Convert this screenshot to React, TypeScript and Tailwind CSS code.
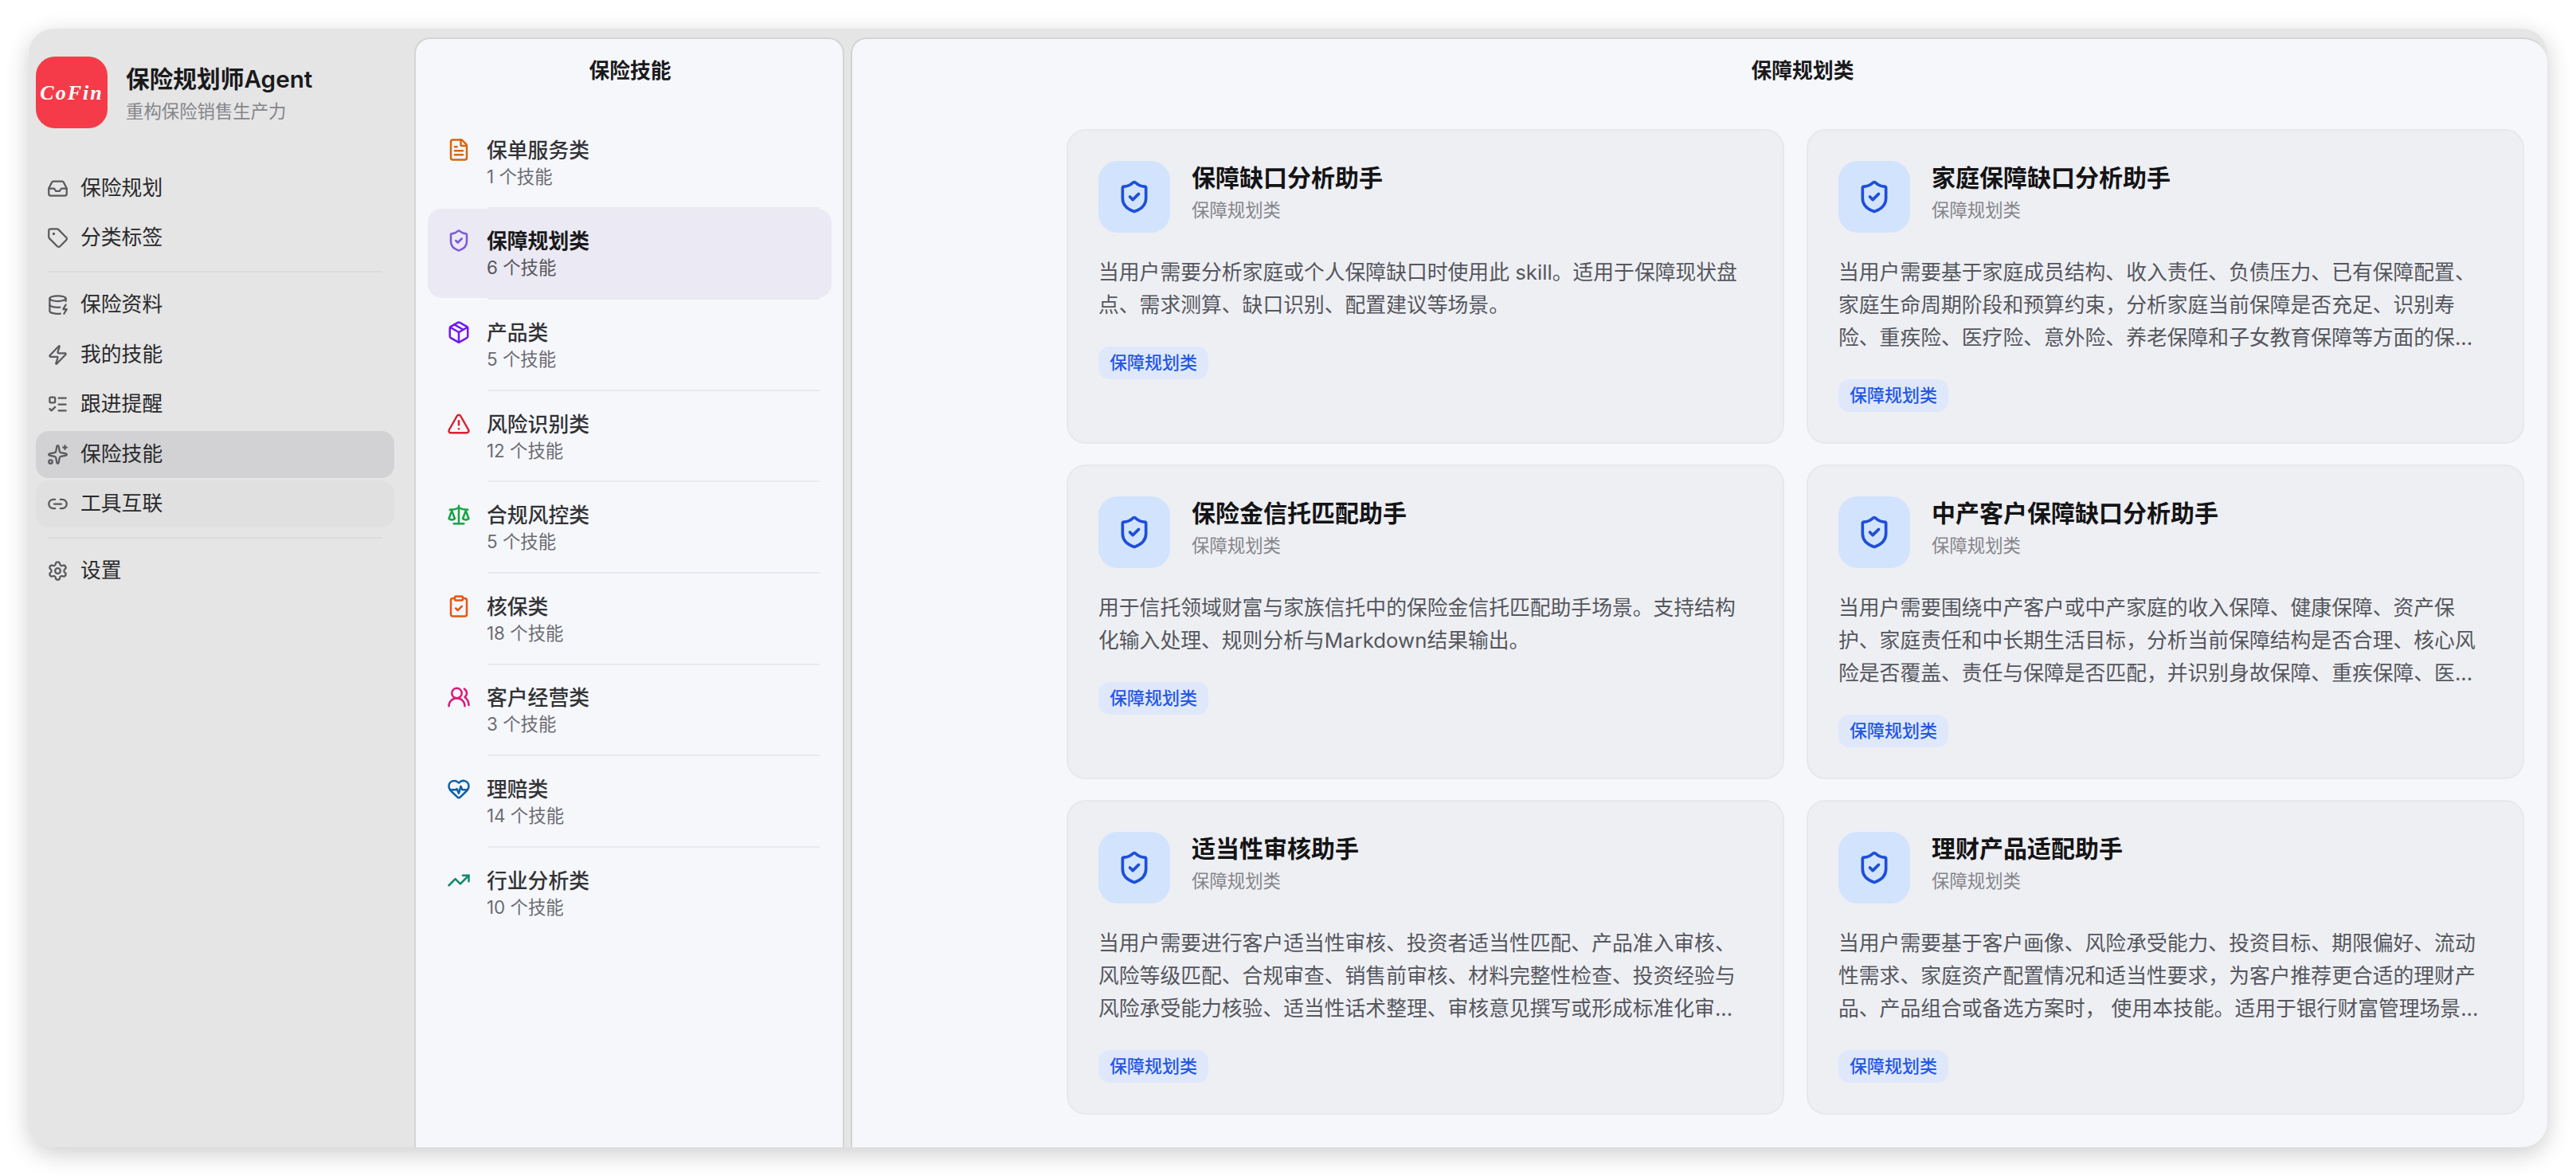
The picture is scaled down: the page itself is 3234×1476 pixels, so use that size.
import {
  Inbox,
  Tag,
  DatabaseZap,
  Zap,
  ListTodo,
  Sparkles,
  Link2,
  Settings,
  FileText,
  ShieldCheck,
  Package,
  TriangleAlert,
  Scale,
  ClipboardCheck,
  UsersRound,
  HeartPulse,
  TrendingUp,
} from "lucide-react";

const navGroups = [
  [
    { icon: Inbox, label: "保险规划" },
    { icon: Tag, label: "分类标签" },
  ],
  [
    { icon: DatabaseZap, label: "保险资料" },
    { icon: Zap, label: "我的技能" },
    { icon: ListTodo, label: "跟进提醒" },
    { icon: Sparkles, label: "保险技能", active: true },
    { icon: Link2, label: "工具互联", hover: true },
  ],
  [{ icon: Settings, label: "设置" }],
];

const categories = [
  { icon: FileText, color: "text-[#d9660f]", name: "保单服务类", count: "1 个技能" },
  { icon: ShieldCheck, color: "text-[#7a5ad8]", name: "保障规划类", count: "6 个技能", active: true },
  { icon: Package, color: "text-[#6f18f0]", name: "产品类", count: "5 个技能" },
  { icon: TriangleAlert, color: "text-[#dc1f2e]", name: "风险识别类", count: "12 个技能" },
  { icon: Scale, color: "text-[#18a344]", name: "合规风控类", count: "5 个技能" },
  { icon: ClipboardCheck, color: "text-[#ea5510]", name: "核保类", count: "18 个技能" },
  { icon: UsersRound, color: "text-[#db1a78]", name: "客户经营类", count: "3 个技能" },
  { icon: HeartPulse, color: "text-[#0f5fa6]", name: "理赔类", count: "14 个技能" },
  { icon: TrendingUp, color: "text-[#14876f]", name: "行业分析类", count: "10 个技能" },
];

const skills = [
  {
    title: "保障缺口分析助手",
    desc: "当用户需要分析家庭或个人保障缺口时使用此 skill。适用于保障现状盘点、需求测算、缺口识别、配置建议等场景。",
  },
  {
    title: "家庭保障缺口分析助手",
    desc: "当用户需要基于家庭成员结构、收入责任、负债压力、已有保障配置、家庭生命周期阶段和预算约束，分析家庭当前保障是否充足、识别寿险、重疾险、医疗险、意外险、养老保障和子女教育保障等方面的保...",
  },
  {
    title: "保险金信托匹配助手",
    desc: "用于信托领域财富与家族信托中的保险金信托匹配助手场景。支持结构化输入处理、规则分析与Markdown结果输出。",
  },
  {
    title: "中产客户保障缺口分析助手",
    desc: "当用户需要围绕中产客户或中产家庭的收入保障、健康保障、资产保护、家庭责任和中长期生活目标，分析当前保障结构是否合理、核心风险是否覆盖、责任与保障是否匹配，并识别身故保障、重疾保障、医...",
  },
  {
    title: "适当性审核助手",
    desc: "当用户需要进行客户适当性审核、投资者适当性匹配、产品准入审核、风险等级匹配、合规审查、销售前审核、材料完整性检查、投资经验与风险承受能力核验、适当性话术整理、审核意见撰写或形成标准化审...",
  },
  {
    title: "理财产品适配助手",
    desc: "当用户需要基于客户画像、风险承受能力、投资目标、期限偏好、流动性需求、家庭资产配置情况和适当性要求，为客户推荐更合适的理财产品、产品组合或备选方案时， 使用本技能。适用于银行财富管理场景...",
  },
];

const Sidebar = () => (
  <aside className="w-[484px] shrink-0 pl-[9px] pr-[25px] pt-[24px]">
    {/* Brand */}
    <div className="flex gap-[23px]">
      <div className="w-[90px] h-[90px] rounded-[24px] bg-[#f53b49] flex items-center justify-center">
        <span className="[font-family:'Liberation_Serif',serif] italic font-bold text-white text-[26px] tracking-[2px]">CoFin</span>
      </div>
      <div className="pt-[10px]">
        <div className="text-[29.7px] leading-[36px] font-semibold text-[#1a1a1c]">保险规划师Agent</div>
        <div className="mt-[7px] text-[22.4px] leading-[32px] text-[#85858a]">重构保险销售生产力</div>
      </div>
    </div>

    {/* Navigation */}
    <nav className="mt-[45.5px]">
      {navGroups.map((group, i) => (
        <div key={i}>
          {i > 0 && <div className="h-[2px] mx-[15px] my-[11.5px] bg-[#dcdcdc]" />}
          <div className="flex flex-col gap-[3.5px]">
            {group.map((item) => (
              <div
                key={item.label}
                className={`h-[59px] rounded-[16px] pl-[14px] flex items-center gap-[15px] text-[25.8px] text-[#2a2a2c] ${
                  item.active ? "bg-[#d2d2d4]" : item.hover ? "bg-[#e0e0e0]" : ""
                }`}
              >
                <item.icon className="w-[27px] h-[27px] text-[#5a5a5e]" />
                <span>{item.label}</span>
              </div>
            ))}
          </div>
        </div>
      ))}
    </nav>
  </aside>
);

const CategoryPanel = () => (
  <section className="w-[540px] shrink-0 bg-[#f5f7fb] border-2 border-b-0 border-[#d4d4d4] rounded-t-[20px]">
    <div className="h-[80px] pl-[2px] flex items-center justify-center text-[25.8px] font-semibold text-[#1a1a1c]">保险技能</div>
    <div className="pt-[18px] pl-[15px] pr-[14px]">
      {categories.map((cat, i) => (
        <div key={cat.name}>
          <div
            className={`h-[112.6px] rounded-[18px] pl-[24px] flex items-center gap-[20px] ${
              cat.active ? "bg-[#ebe9f3]" : ""
            }`}
          >
            <div className="flex gap-[20px]">
              <cat.icon className={`w-[30px] h-[30px] mt-[4px] ${cat.color}`} />
              <div className="pt-[2px]">
                <div className={`text-[25.8px] leading-[36px] ${cat.active ? "font-semibold text-[#1a1a1c]" : "font-medium text-[#333336]"}`}>
                  {cat.name}
                </div>
                <div className={`-mt-[1px] text-[22.4px] leading-[32px] ${cat.active ? "text-[#55555c]" : "text-[#6c6c72]"}`}>{cat.count}</div>
              </div>
            </div>
          </div>
          {i < categories.length - 1 && <div className="h-[2px] ml-[75px] mr-[15px] bg-[#e9eaef]" />}
        </div>
      ))}
    </div>
  </section>
);

const SkillCard = ({ title, desc }: { title: string; desc: string }) => (
  <div className="h-[395px] rounded-[24px] border-2 border-[#e7e8ec] bg-[#eeeff3] p-[38px]">
    <div className="flex gap-[27px]">
      <div className="w-[90px] h-[90px] rounded-[24px] bg-[#d2e3fd] flex items-center justify-center">
        <ShieldCheck className="w-[44px] h-[44px] text-[#1d4fd8]" />
      </div>
      <div className="pt-[3px]">
        <div className="text-[30px] leading-[36px] font-semibold text-[#141416]">{title}</div>
        <div className="mt-[7px] text-[22.4px] leading-[32px] text-[#85858a]">保障规划类</div>
      </div>
    </div>
    <p className="mt-[29px] text-[25.8px] leading-[41px] text-[#55575e]">{desc}</p>
    <span className="mt-[32px] inline-block h-[41px] px-[14px] rounded-[14px] bg-[#dfe8fa] text-[22px] leading-[41px] font-medium text-[#2557e6]">
      保障规划类
    </span>
  </div>
);

export default function App() {
  return (
    <div className="w-[3234px] h-[1476px] bg-white p-[36px] [font-family:Inter,'Noto_Sans_CJK_SC',sans-serif]">
      <div className="w-[3162px] h-[1404px] rounded-[32px] overflow-hidden bg-[#e5e5e5] shadow-[0_8px_30px_rgba(0,0,0,0.2)] pt-[11px] flex">
        <Sidebar />
        <CategoryPanel />
        <main className="ml-[8px] flex-1 bg-[#f5f7fb] border-l-2 border-t-2 border-[#d4d4d4] rounded-tl-[20px] rounded-tr-[30px]">
          <div className="h-[80px] pl-[258px] flex items-center justify-center text-[25.8px] font-semibold text-[#1a1a1c]">保障规划类</div>
          <div className="pt-[33px] pl-[269px] pr-[29px] grid grid-cols-2 gap-x-[28px] gap-y-[26px]">
            {skills.map((s) => (
              <SkillCard key={s.title} title={s.title} desc={s.desc} />
            ))}
          </div>
        </main>
      </div>
    </div>
  );
}
